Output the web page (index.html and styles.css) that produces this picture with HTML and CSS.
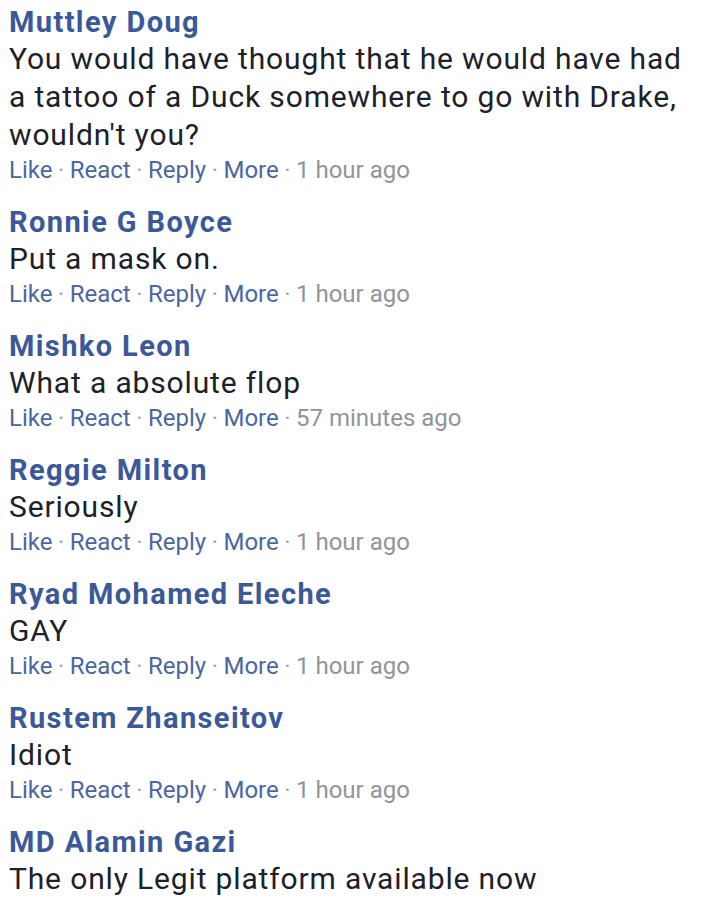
FILE: index.html
```html
<!DOCTYPE html>
<html>
<head>
<meta charset="utf-8">
<link rel="stylesheet" href="styles.css">
</head>
<body>
<div class="list">
  <div class="comment">
    <div class="name">Muttley Doug</div>
    <div class="text">You would have thought that he would have had a tattoo of a Duck somewhere to go with Drake, wouldn't you?</div>
    <div class="actions"><span class="link">Like</span><span class="dot">·</span><span class="link">React</span><span class="dot">·</span><span class="link">Reply</span><span class="dot">·</span><span class="link">More</span><span class="dot">·</span><span class="time">1 hour ago</span></div>
  </div>
  <div class="comment">
    <div class="name">Ronnie G Boyce</div>
    <div class="text">Put a mask on.</div>
    <div class="actions"><span class="link">Like</span><span class="dot">·</span><span class="link">React</span><span class="dot">·</span><span class="link">Reply</span><span class="dot">·</span><span class="link">More</span><span class="dot">·</span><span class="time">1 hour ago</span></div>
  </div>
  <div class="comment">
    <div class="name">Mishko Leon</div>
    <div class="text">What a absolute flop</div>
    <div class="actions"><span class="link">Like</span><span class="dot">·</span><span class="link">React</span><span class="dot">·</span><span class="link">Reply</span><span class="dot">·</span><span class="link">More</span><span class="dot">·</span><span class="time">57 minutes ago</span></div>
  </div>
  <div class="comment">
    <div class="name">Reggie Milton</div>
    <div class="text">Seriously</div>
    <div class="actions"><span class="link">Like</span><span class="dot">·</span><span class="link">React</span><span class="dot">·</span><span class="link">Reply</span><span class="dot">·</span><span class="link">More</span><span class="dot">·</span><span class="time">1 hour ago</span></div>
  </div>
  <div class="comment">
    <div class="name">Ryad Mohamed Eleche</div>
    <div class="text">GAY</div>
    <div class="actions"><span class="link">Like</span><span class="dot">·</span><span class="link">React</span><span class="dot">·</span><span class="link">Reply</span><span class="dot">·</span><span class="link">More</span><span class="dot">·</span><span class="time">1 hour ago</span></div>
  </div>
  <div class="comment">
    <div class="name">Rustem Zhanseitov</div>
    <div class="text">Idiot</div>
    <div class="actions"><span class="link">Like</span><span class="dot">·</span><span class="link">React</span><span class="dot">·</span><span class="link">Reply</span><span class="dot">·</span><span class="link">More</span><span class="dot">·</span><span class="time">1 hour ago</span></div>
  </div>
  <div class="comment">
    <div class="name">MD Alamin Gazi</div>
    <div class="text">The only Legit platform available now</div>
  </div>
</div>
</body>
</html>
```
FILE: styles.css
```css
html, body {
  margin: 0;
  padding: 0;
  background: #ffffff;
}
body {
  font-family: Roboto, "Noto Sans", sans-serif;
  width: 720px;
  height: 901px;
  overflow: hidden;
}
.list {
  display: flex;
  flex-direction: column;
  gap: 17px;
  padding: 4px 0 0 9px;
}
.name {
  font-size: 29px;
  font-weight: 700;
  line-height: 36px;
  letter-spacing: 1.4px;
  color: #3b5998;
}
.text {
  font-size: 30px;
  line-height: 38px;
  letter-spacing: 0.85px;
  color: #1d2129;
  width: 692px;
}
.actions {
  font-size: 24px;
  line-height: 33px;
  color: #4b67a1;
}
.dot {
  color: #a0a4ab;
  padding: 0 5.5px;
}
.time {
  color: #90949c;
}
```
